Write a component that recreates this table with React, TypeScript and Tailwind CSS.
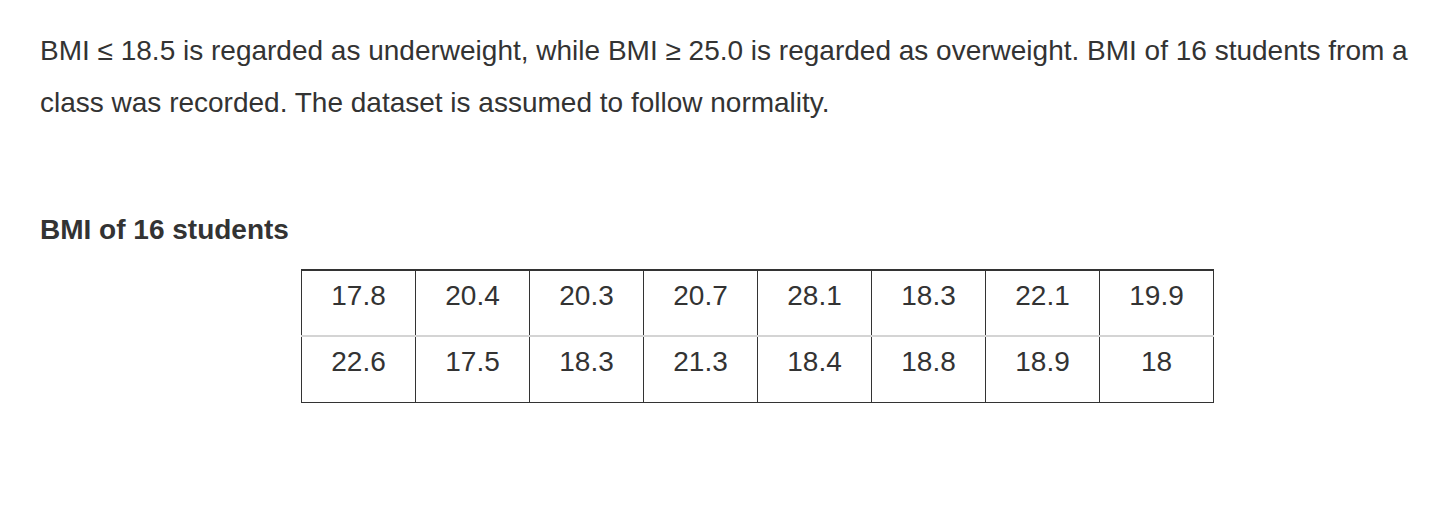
const rows = [
	["17.8", "20.4", "20.3", "20.7", "28.1", "18.3", "22.1", "19.9"],
	["22.6", "17.5", "18.3", "21.3", "18.4", "18.8", "18.9", "18"],
]

export default function App() {
	return (
		<div className="min-h-[512px] bg-white pl-10 pr-3 pt-[25px] text-[28px] text-[#333] font-['Liberation_Sans',Arial,sans-serif]">
			<p className="leading-[52px]">
				BMI ≤ 18.5 is regarded as underweight, while BMI ≥ 25.0 is regarded as overweight. BMI of 16 students from a
				class was recorded. The dataset is assumed to follow normality.
			</p>
			<h3 className="mt-[86px] font-bold leading-[30px]">BMI of 16 students</h3>
			<table className="mt-[24px] ml-[261px] border-collapse border-t-2 border-b border-x border-[#333]">
				<tbody>
					{rows.map((row, i) => (
						<tr key={i} className={i > 0 ? "border-t-2 border-[#d4d4d4]" : ""}>
							{row.map((v, j) => (
								<td
									key={j}
									className="h-[66px] w-[114px] border-l border-[#333] pb-[14px] text-center align-middle leading-[30px] first:border-l-0"
								>
									{v}
								</td>
							))}
						</tr>
					))}
				</tbody>
			</table>
		</div>
	)
}
